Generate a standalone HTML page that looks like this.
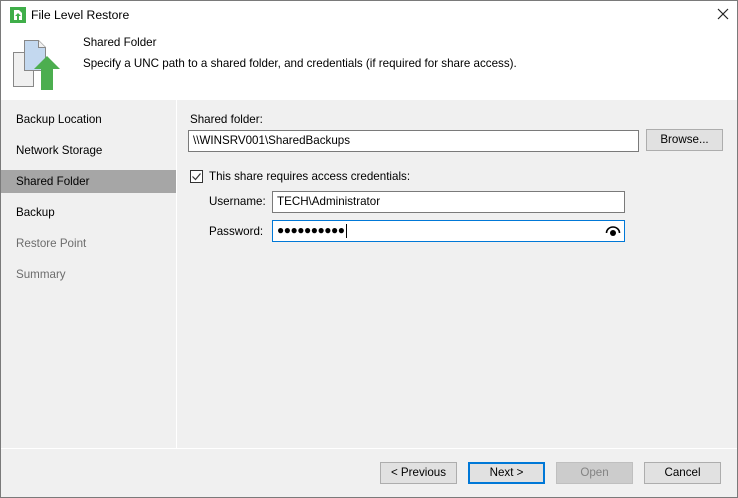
<!DOCTYPE html>
<html><head><style>
*{box-sizing:border-box;margin:0;padding:0}
body{width:738px;height:498px;overflow:hidden;background:#f0f0f0;font-family:"Liberation Sans",sans-serif;font-size:11.6px;color:#000;position:relative}
.frame{position:absolute;left:0;top:0;width:738px;height:498px;border:1px solid #7a7a7a;z-index:5;pointer-events:none}
.a{position:absolute}
.inp{position:absolute;background:#fff;border:1px solid #7a7a7a;padding:3px 0 0 4px;height:22px}
.btn{position:absolute;background:#e1e1e1;border:1px solid #adadad;text-align:center;line-height:20px;height:22px;width:77px}
.nav{position:absolute;left:16px}
</style></head><body>
<div class="frame"></div>
<div class="a" style="left:0;top:0;width:738px;height:100px;background:#fff"></div>
<svg class="a" style="left:10px;top:7px" width="16" height="16"><rect x="0.5" y="0.5" width="15" height="15" fill="#3fae49" stroke="#3fae49"/><path d="M4 3h5l3 3v7H4z" fill="#fff"/><path d="M8 6l-3 3h2v4h2V9h2z" fill="#3fae49"/></svg>
<div class="a" style="left:31px;top:8px;font-size:12.2px">File Level Restore</div>
<svg class="a" style="left:717px;top:8px" width="12" height="12"><path d="M1 1L11 11M11 1L1 11" stroke="#222" stroke-width="1.2"/></svg>
<svg class="a" style="left:11px;top:38px" width="56" height="56">
<path d="M2.5 14.5h14l6 6v28h-20z" fill="#f0f0f0" stroke="#888"/>
<path d="M13.5 2.5h14l7 7v23h-21z" fill="#c3d8ef" stroke="#888"/>
<path d="M27.5 2.5v7h7" fill="#f0f0f0" stroke="#888"/>
<path d="M36 18l-13 13h7v21h12V31h7z" fill="#4cae4f"/>
</svg>
<div class="a" style="left:83px;top:36px">Shared Folder</div>
<div class="a" style="left:83px;top:57px">Specify a UNC path to a shared folder, and credentials (if required for share access).</div>
<div class="a" style="left:176px;top:100px;width:1px;height:348px;background:#fff"></div>
<div class="a" style="left:0;top:448px;width:738px;height:1px;background:#fff"></div>
<div class="nav" style="top:113px">Backup Location</div>
<div class="nav" style="top:144px">Network Storage</div>
<div class="a" style="left:0;top:170px;width:176px;height:23px;background:#a6a6a6"></div>
<div class="nav" style="top:175px">Shared Folder</div>
<div class="nav" style="top:206px">Backup</div>
<div class="nav" style="top:237px;color:#6d6d6d">Restore Point</div>
<div class="nav" style="top:268px;color:#6d6d6d">Summary</div>
<div class="a" style="left:190px;top:113px">Shared folder:</div>
<div class="inp" style="left:188px;top:130px;width:451px">\\WINSRV001\SharedBackups</div>
<div class="btn" style="left:646px;top:129px">Browse...</div>
<svg class="a" style="left:190px;top:170px" width="13" height="13"><rect x="0.5" y="0.5" width="12" height="12" fill="#fff" stroke="#333"/><path d="M2.5 6.5l3 3 5-6" fill="none" stroke="#333" stroke-width="1.2"/></svg>
<div class="a" style="left:209px;top:170px">This share requires access credentials:</div>
<div class="a" style="left:209px;top:195px">Username:</div>
<div class="inp" style="left:272px;top:191px;width:353px">TECH\Administrator</div>
<div class="a" style="left:209px;top:225px">Password:</div>
<div class="inp" style="left:272px;top:220px;width:353px;border-color:#0078d7;padding-top:2px;letter-spacing:-0.5px;font-size:12px">●●●●●●●●●●<span style="display:inline-block;width:1px;height:14px;background:#000;vertical-align:middle;margin-left:2px"></span></div>
<svg class="a" style="left:605px;top:225px" width="16" height="12"><path d="M1.5 8a6.5 6 0 0 1 13 0" fill="none" stroke="#000" stroke-width="1.6"/><circle cx="8" cy="8" r="3" fill="#000"/></svg>
<div class="btn" style="left:380px;top:462px">&lt; Previous</div>
<div class="btn" style="left:468px;top:462px;border:2px solid #0078d7;line-height:18px">Next &gt;</div>
<div class="btn" style="left:556px;top:462px;background:#ccc;border-color:#bfbfbf;color:#838383">Open</div>
<div class="btn" style="left:644px;top:462px">Cancel</div>
</body></html>
